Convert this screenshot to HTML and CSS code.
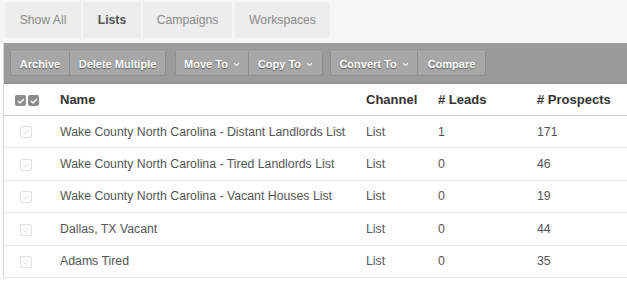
FILE: index.html
```html
<!DOCTYPE html>
<html lang="en">
<head>
    <meta charset="UTF-8">
    <meta name="viewport" content="width=device-width, initial-scale=1.0">
    <title>Lists</title>
    <link rel="stylesheet" href="styles.css">
</head>
<body>
    <div class="tabs">
        <a class="tab tab-all">Show All</a>
        <a class="tab tab-lists active">Lists</a>
        <a class="tab tab-campaigns">Campaigns</a>
        <a class="tab tab-workspaces">Workspaces</a>
    </div>

    <div class="panel">
        <div class="toolbar">
            <div class="btn-group">
                <button class="btn btn-archive">Archive</button>
                <button class="btn btn-delete">Delete Multiple</button>
            </div>
            <div class="btn-group">
                <button class="btn btn-move">Move To <svg class="caret" width="7" height="5" viewBox="0 0 7 5"><path d="M1 1.2 L3.5 3.6 L6 1.2" fill="none" stroke="#fff" stroke-width="1.1"/></svg></button>
                <button class="btn btn-copy">Copy To <svg class="caret" width="7" height="5" viewBox="0 0 7 5"><path d="M1 1.2 L3.5 3.6 L6 1.2" fill="none" stroke="#fff" stroke-width="1.1"/></svg></button>
            </div>
            <div class="btn-group">
                <button class="btn btn-convert">Convert To <svg class="caret" width="7" height="5" viewBox="0 0 7 5"><path d="M1 1.2 L3.5 3.6 L6 1.2" fill="none" stroke="#fff" stroke-width="1.1"/></svg></button>
                <button class="btn btn-compare">Compare</button>
            </div>
        </div>

        <table class="lists">
            <thead>
                <tr>
                    <th class="col-check">
                        <span class="check dark"><svg width="8" height="6" viewBox="0 0 8 6"><path d="M1 3 L3 5 L7 1" fill="none" stroke="#fff" stroke-width="1.4"/></svg></span><span class="check dark"><svg width="8" height="6" viewBox="0 0 8 6"><path d="M1 3 L3 5 L7 1" fill="none" stroke="#fff" stroke-width="1.4"/></svg></span>
                    </th>
                    <th class="col-name">Name</th>
                    <th class="col-channel">Channel</th>
                    <th class="col-leads"># Leads</th>
                    <th class="col-prospects"># Prospects</th>
                </tr>
            </thead>
            <tbody>
                <tr>
                    <td class="col-check"><span class="check light"><svg width="8" height="6" viewBox="0 0 8 6"><path d="M1 3 L3 5 L7 1" fill="none" stroke="#e4e4e4" stroke-width="1"/></svg></span></td>
                    <td>Wake County North Carolina - Distant Landlords List</td>
                    <td>List</td>
                    <td>1</td>
                    <td>171</td>
                </tr>
                <tr>
                    <td class="col-check"><span class="check light"><svg width="8" height="6" viewBox="0 0 8 6"><path d="M1 3 L3 5 L7 1" fill="none" stroke="#e4e4e4" stroke-width="1"/></svg></span></td>
                    <td>Wake County North Carolina - Tired Landlords List</td>
                    <td>List</td>
                    <td>0</td>
                    <td>46</td>
                </tr>
                <tr>
                    <td class="col-check"><span class="check light"><svg width="8" height="6" viewBox="0 0 8 6"><path d="M1 3 L3 5 L7 1" fill="none" stroke="#e4e4e4" stroke-width="1"/></svg></span></td>
                    <td>Wake County North Carolina - Vacant Houses List</td>
                    <td>List</td>
                    <td>0</td>
                    <td>19</td>
                </tr>
                <tr>
                    <td class="col-check"><span class="check light"><svg width="8" height="6" viewBox="0 0 8 6"><path d="M1 3 L3 5 L7 1" fill="none" stroke="#e4e4e4" stroke-width="1"/></svg></span></td>
                    <td>Dallas, TX Vacant</td>
                    <td>List</td>
                    <td>0</td>
                    <td>44</td>
                </tr>
                <tr>
                    <td class="col-check"><span class="check light"><svg width="8" height="6" viewBox="0 0 8 6"><path d="M1 3 L3 5 L7 1" fill="none" stroke="#e4e4e4" stroke-width="1"/></svg></span></td>
                    <td>Adams Tired</td>
                    <td>List</td>
                    <td>0</td>
                    <td>35</td>
                </tr>
            </tbody>
        </table>
    </div>
</body>
</html>
```

FILE: styles.css
```css
body {
    margin: 0;
    font-family: "Liberation Sans", Arial, Helvetica, sans-serif;
    background: #fff;
    color: #555;
}
.tabs {
    display: flex;
    gap: 2px;
    height: 43px;
    padding: 2px 0 0 5px;
    box-sizing: border-box;
    background: #f6f6f6;
}
.tab {
    display: flex;
    align-items: center;
    justify-content: center;
    height: 36px;
    box-sizing: border-box;
    background: #ededed;
    border-radius: 2px;
    color: #8a8a8a;
    font-size: 12.2px;
    white-space: nowrap;
}
.tab-all { width: 76px; }
.tab-lists { width: 58px; }
.tab-campaigns { width: 89px; }
.tab-workspaces { width: 95px; margin-left: 1px; }
.tab.active {
    color: #555;
    font-weight: bold;
}
.panel {
    margin-left: 3px;
    border-left: 1px solid #d6d6d6;
}
.toolbar {
    display: flex;
    height: 41px;
    padding: 8px 0 0 6px;
    box-sizing: border-box;
    background: #9b9b9b;
    border-bottom: 1px solid #8e8e8e;
}
.btn-group {
    display: flex;
    height: 25px;
    margin-right: 9px;
}
.btn-group:nth-child(2) {
    margin-right: 7px;
}
.btn {
    display: flex;
    align-items: center;
    justify-content: center;
    gap: 5px;
    height: 25px;
    padding: 0;
    box-sizing: border-box;
    background: #a7a7a7;
    border: 1px solid #8d8d8d;
    border-top-color: #b0b0b0;
    border-left-width: 0;
    color: #fff;
    font-family: inherit;
    font-size: 11px;
    font-weight: bold;
    white-space: nowrap;
    text-shadow: 0 1px 1px rgba(0,0,0,0.45);
}
.btn:first-child {
    border-left-width: 1px;
    border-radius: 3px 0 0 3px;
}
.btn:last-child {
    border-radius: 0 3px 3px 0;
}
.btn-archive { width: 60px; }
.btn-delete { width: 96px; }
.btn-move { width: 74px; }
.btn-copy { width: 74px; }
.btn-convert { width: 88px; }
.btn-compare { width: 68px; }
.caret {
    margin-top: 1px;
}
.lists {
    width: 100%;
    border-collapse: collapse;
    font-size: 12.3px;
}
.lists th {
    height: 31px;
    padding: 0;
    text-align: left;
    color: #333;
    font-size: 13px;
    font-weight: bold;
    border-bottom: 1px solid #cfcfcf;
}
.lists td {
    height: 31.4px;
    padding: 0;
    color: #555;
    border-bottom: 1px solid #e6e6e6;
}
.col-check {
    width: 56px;
    padding-left: 11px !important;
    box-sizing: border-box;
}
.col-name { width: 306px; }
.col-channel { width: 72px; }
.col-leads { width: 99px; }
.check {
    display: inline-flex;
    align-items: center;
    justify-content: center;
    vertical-align: middle;
    border-radius: 2px;
}
.check.dark {
    width: 11px;
    height: 11px;
    margin-right: 2px;
    background: #8c8c8c;
}
.check.light {
    width: 10px;
    height: 10px;
    margin-left: 5px;
    border: 1px solid #e2e2e2;
    background: #fbfbfb;
}
```
